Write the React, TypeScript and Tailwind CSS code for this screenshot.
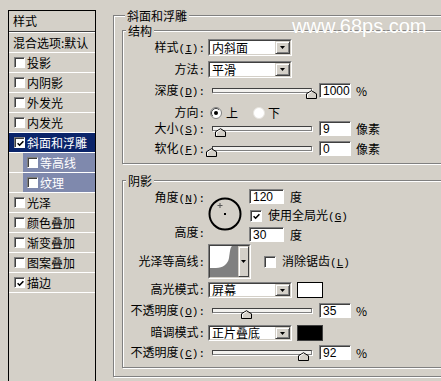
import React from "react";

function M({ children }: { children: React.ReactNode }) {
  return <span className="[font-family:'Liberation_Mono',monospace] text-[11px]">{children}</span>;
}
function U({ children }: { children: React.ReactNode }) {
  return <span className="underline underline-offset-1">{children}</span>;
}

function CheckBox({ checked = false, big = false }: { checked?: boolean; big?: boolean }) {
  return (
    <span
      className={
        (big ? "w-[12px] h-[12px] " : "w-[11px] h-[11px] ") +
        "shrink-0 bg-white border border-t-[#808080] border-l-[#808080] border-r-white border-b-white shadow-[inset_1px_1px_0_#404040] flex items-center justify-center"
      }
    >
      {checked && (
        <svg width="7" height="7" viewBox="0 0 7 7" className="ml-[1px] mt-[1px]">
          <path d="M0.6 3.2 L2.6 5.2 L6.4 1.2" fill="none" stroke="#000" strokeWidth="1.6" />
        </svg>
      )}
    </span>
  );
}

function Label({ children }: { children: React.ReactNode }) {
  return <div className="w-[82px] shrink-0 text-right whitespace-nowrap leading-[14px]">{children}</div>;
}

function Select({ text, tall = false }: { text: string; tall?: boolean }) {
  return (
    <div
      className={
        (tall ? "h-[17px] " : "h-[16px] ") +
        "ml-[3px] w-[84px] shrink-0 border border-t-[#808080] border-l-[#808080] border-r-white border-b-white"
      }
    >
      <div className="w-full h-full border border-t-[#404040] border-l-[#404040] border-r-[#d4d0c8] border-b-[#d4d0c8] bg-white flex">
        <span className="flex-1 pl-[2px] flex items-center leading-[14px] whitespace-nowrap">{text}</span>
        <span className="w-[15px] h-full bg-[#d4d0c8] border border-t-[#d4d0c8] border-l-[#d4d0c8] border-r-[#404040] border-b-[#404040] shadow-[inset_1px_1px_0_#fff,inset_-1px_-1px_0_#808080] flex items-center justify-center">
          <svg width="5" height="3" viewBox="0 0 5 3">
            <path d="M0 0H5L2.5 3Z" fill="#000" />
          </svg>
        </span>
      </div>
    </div>
  );
}

function Num({ v, wide = false }: { v: string; wide?: boolean }) {
  return (
    <div
      className={
        (wide ? "w-[35px] " : "w-[32px] ") +
        "h-[15px] shrink-0 bg-white border border-t-[#808080] border-l-[#808080] border-r-white border-b-white shadow-[inset_1px_1px_0_#404040] pl-[3px] pt-[1px] flex items-center [font-family:'Liberation_Sans',sans-serif] text-[12px] leading-[13px]"
      }
    >
      {v}
    </div>
  );
}

function Slider({ value }: { value: number }) {
  const left = Math.round(-6 + value);
  return (
    <div className="relative w-[100px] h-[15px] ml-[7px] shrink-0 flex items-center">
      <div className="w-full h-[5px] bg-[#f2f1ee] border border-t-[#404040] border-l-[#404040] border-r-[#808080] border-b-[#808080] shadow-[1px_1px_0_#fff]" />
      <svg className="absolute top-[7px]" style={{ left }} width="11" height="9" viewBox="0 0 11 9">
        <path d="M0.5 8.5V3.8L5.5 0.7L10.5 3.8V8.5Z" fill="#d4d0c8" stroke="#000" />
        <path d="M1.5 7.5V4.3L5.5 1.8" fill="none" stroke="#fff" />
      </svg>
    </div>
  );
}

function Radio({ on }: { on: boolean }) {
  return (
    <svg width="12" height="12" viewBox="0 0 12 12" className="shrink-0">
      <circle cx="6" cy="6" r="5.5" fill="#fff" stroke={on ? "#808080" : "#e6e4df"} />
      {on && <path d="M2.8 9.2 A4.5 4.5 0 0 1 9.2 2.8" fill="none" stroke="#404040" />}
      {on && <circle cx="6" cy="6" r="2" fill="#000" />}
    </svg>
  );
}

function LRow({
  t,
  c = false,
  sel = false,
  sub = false,
}: {
  t: string;
  c?: boolean;
  sel?: boolean;
  sub?: boolean;
}) {
  if (sub) {
    return (
      <div className="h-[20px] flex border-b border-white">
        <div className="w-[14px] shrink-0" />
        <div className="flex-1 bg-[#7f89ad] text-white flex items-center pl-[4px]">
          <CheckBox />
          <span className="ml-[2px] leading-[14px] whitespace-nowrap">{t}</span>
        </div>
      </div>
    );
  }
  return (
    <div
      className={
        (sel ? "bg-[#0a246a] text-white " : "") +
        "h-[20px] flex items-center pl-[5px] border-b border-white"
      }
    >
      <CheckBox checked={c} />
      <span className="ml-[2px] leading-[14px] whitespace-nowrap">{t}</span>
    </div>
  );
}

function Group({
  legend,
  cls,
  lcls,
  children,
}: {
  legend: string;
  cls: string;
  lcls: string;
  children: React.ReactNode;
}) {
  return (
    <div
      className={
        cls +
        " relative shrink-0 border border-[#808080] shadow-[inset_1px_1px_0_#fff,1px_1px_0_#fff] flex flex-col"
      }
    >
      <span
        className={
          lcls +
          " absolute top-[-7px] h-[13px] leading-[13px] px-[2px] bg-[#d4d0c8] whitespace-nowrap"
        }
      >
        {legend}
      </span>
      {children}
    </div>
  );
}

export default function App() {
  return (
    <div className="w-[441px] h-[381px] bg-[#d4d0c8] relative overflow-hidden flex items-start text-[12px] text-black [font-family:'Noto_Sans_CJK_SC','Noto_Sans',sans-serif]">
      {/* Left styles list */}
      <div className="ml-[8px] mt-[10px] w-[88px] h-[380px] shrink-0 border-l border-t border-r border-black flex flex-col">
        <div className="h-[20px] pl-[4px] flex items-center leading-[14px]">样式</div>
        <div className="h-[2px] border-t border-[#404040] bg-white" />
        <div className="h-[20px] pl-[4px] flex items-center leading-[14px] border-b border-white whitespace-nowrap">
          混合选项:默认
        </div>
        <LRow t="投影" />
        <LRow t="内阴影" />
        <LRow t="外发光" />
        <LRow t="内发光" />
        <LRow t="斜面和浮雕" c sel />
        <LRow t="等高线" sub />
        <LRow t="纹理" sub />
        <LRow t="光泽" />
        <LRow t="颜色叠加" />
        <LRow t="渐变叠加" />
        <LRow t="图案叠加" />
        <LRow t="描边" c />
      </div>

      {/* Right settings */}
      <div className="ml-[17px] mt-[15px]">
        <Group legend="斜面和浮雕" lcls="left-[11px]" cls="w-[350px] h-[362px] pl-[8px]">
          <div className="mt-[4px]" />
          <Group legend="结构" lcls="left-[3px]" cls="mt-[10px] w-[330px] h-[134px]">
            <div className="flex items-center h-[17px] mt-[8px]">
              <Label>
                样式<M>(<U>I</U>):</M>
              </Label>
              <Select text="内斜面" tall />
            </div>
            <div className="flex items-center h-[17px] mt-[5px]">
              <Label>
                方法<M>:</M>
              </Label>
              <Select text="平滑" tall />
            </div>
            <div className="flex items-center h-[15px] mt-[5px]">
              <Label>
                深度<M>(<U>D</U>):</M>
              </Label>
              <Slider value={100} />
              <div className="ml-[7px]">
                <Num v="1000" />
              </div>
              <span className="ml-[5px] leading-[14px]">%</span>
            </div>
            <div className="flex items-center h-[15px] mt-[7px]">
              <Label>
                方向<M>:</M>
              </Label>
              <div className="ml-[5px] flex items-center">
                <Radio on />
                <span className="ml-[4px] leading-[14px]">上</span>
                <div className="ml-[15px] flex items-center">
                  <Radio on={false} />
                </div>
                <span className="ml-[3px] leading-[14px]">下</span>
              </div>
            </div>
            <div className="flex items-center h-[15px] mt-[1px]">
              <Label>
                大小<M>(<U>S</U>):</M>
              </Label>
              <Slider value={9} />
              <div className="ml-[7px]">
                <Num v="9" />
              </div>
              <span className="ml-[5px] leading-[14px]">像素</span>
            </div>
            <div className="flex items-center h-[15px] mt-[5px]">
              <Label>
                软化<M>(<U>F</U>):</M>
              </Label>
              <Slider value={0} />
              <div className="ml-[7px]">
                <Num v="0" />
              </div>
              <span className="ml-[5px] leading-[14px]">像素</span>
            </div>
          </Group>

          <Group legend="阴影" lcls="left-[3px]" cls="mt-[16px] w-[330px] h-[188px]">
            <div className="flex mt-[8px]">
              <div className="w-[82px] shrink-0 flex flex-col items-end">
                <div className="mt-[1px] h-[14px] leading-[14px] whitespace-nowrap">
                  角度<M>(<U>N</U>):</M>
                </div>
                <div className="mt-[21px] h-[14px] leading-[14px] whitespace-nowrap">
                  高度<M>:</M>
                </div>
              </div>
              <svg className="ml-[3px] mt-[8px] shrink-0" width="34" height="34" viewBox="0 0 34 34">
                <circle cx="17" cy="17" r="15.5" fill="none" stroke="#000" strokeWidth="2" />
                <path d="M9.5 8.5H14.5M12 6V11" stroke="#555" strokeWidth="1" />
                <rect x="16" y="16" width="2" height="2" fill="#000" />
              </svg>
              <div className="ml-[7px] flex flex-col">
                <div className="flex items-center h-[15px]">
                  <Num v="120" wide />
                  <span className="ml-[6px] leading-[14px]">度</span>
                </div>
                <div className="flex items-center h-[12px] mt-[6px] ml-[1px]">
                  <CheckBox checked big />
                  <span className="ml-[6px] leading-[14px] whitespace-nowrap">
                    使用全局光<M>(<U>G</U>)</M>
                  </span>
                </div>
                <div className="flex items-center h-[15px] mt-[5px]">
                  <Num v="30" wide />
                  <span className="ml-[6px] leading-[14px]">度</span>
                </div>
              </div>
            </div>

            <div className="flex items-center h-[35px] mt-[2px]">
              <Label>
                光泽等高线<M>:</M>
              </Label>
              <div className="ml-[3px] w-[43px] h-[35px] shrink-0 border border-t-[#808080] border-l-[#808080] border-r-white border-b-white">
                <div className="w-full h-full border border-t-[#404040] border-l-[#404040] border-r-[#d4d0c8] border-b-[#d4d0c8] flex">
                  <svg width="28" height="31" viewBox="0 0 28 31" className="shrink-0">
                    <rect width="28" height="31" fill="#fff" />
                    <path d="M0 22 L6 22 C13 22 18 18 19 12 C20 6 20 2 22 0 L28 0 L28 31 L0 31 Z" fill="#808080" />
                  </svg>
                  <span className="flex-1 bg-[#d4d0c8] border border-t-[#d4d0c8] border-l-[#d4d0c8] border-r-[#404040] border-b-[#404040] shadow-[inset_1px_1px_0_#fff] flex items-center justify-center">
                    <svg width="5" height="3" viewBox="0 0 5 3">
                      <path d="M0 0H5L2.5 3Z" fill="#000" />
                    </svg>
                  </span>
                </div>
              </div>
              <div className="ml-[13px] flex items-center">
                <CheckBox big />
                <span className="ml-[6px] leading-[14px] whitespace-nowrap">
                  消除锯齿<M>(<U>L</U>)</M>
                </span>
              </div>
            </div>

            <div className="flex items-center h-[16px] mt-[3px]">
              <Label>
                高光模式<M>:</M>
              </Label>
              <Select text="屏幕" />
              <div className="ml-[5px] w-[26px] h-[16px] shrink-0 bg-white border border-black" />
            </div>
            <div className="flex items-center h-[15px] mt-[5px]">
              <Label>
                不透明度<M>(<U>O</U>):</M>
              </Label>
              <Slider value={35} />
              <div className="ml-[7px]">
                <Num v="35" />
              </div>
              <span className="ml-[5px] leading-[14px]">%</span>
            </div>
            <div className="flex items-center h-[16px] mt-[7px]">
              <Label>
                暗调模式<M>:</M>
              </Label>
              <Select text="正片叠底" />
              <div className="ml-[5px] w-[26px] h-[16px] shrink-0 bg-black border border-[#404040]" />
            </div>
            <div className="flex items-center h-[15px] mt-[4px]">
              <Label>
                不透明度<M>(<U>C</U>):</M>
              </Label>
              <Slider value={92} />
              <div className="ml-[7px]">
                <Num v="92" />
              </div>
              <span className="ml-[5px] leading-[14px]">%</span>
            </div>
          </Group>
        </Group>
      </div>

      <span className="absolute left-[292px] top-[16px] text-[20px] leading-[20px] text-white [font-family:'Liberation_Sans',sans-serif] [text-shadow:0_0_1px_#c8c4bc]">
        www.68ps.com
      </span>
    </div>
  );
}
